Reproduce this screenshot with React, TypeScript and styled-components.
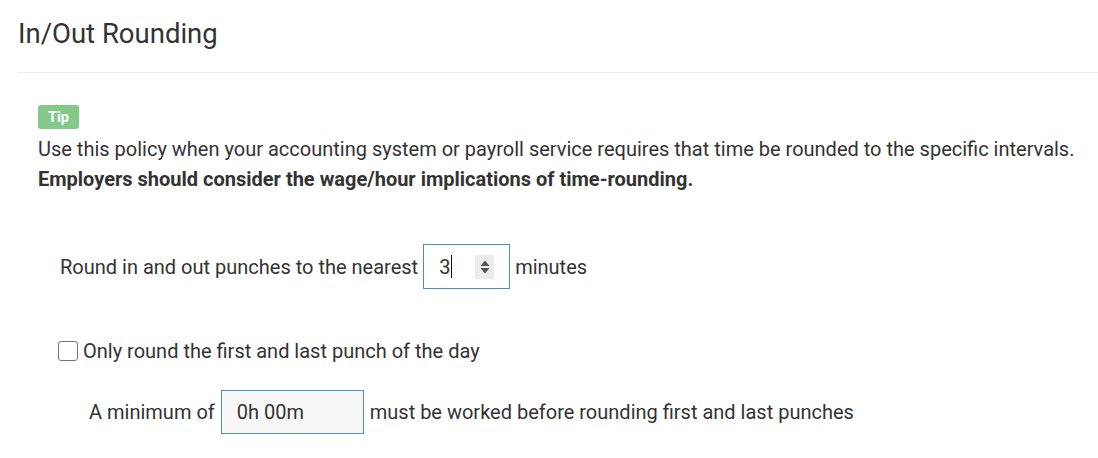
import styled, { createGlobalStyle } from 'styled-components';
import { useState } from 'react';

const GlobalStyle = createGlobalStyle`
  body {
    margin: 0;
    background: #ffffff;
    font-family: Roboto, "Liberation Sans", Arial, sans-serif;
    color: #333333;
  }
`;

const Page = styled.div`
  padding-left: 18px;
`;

const Header = styled.div`
  height: 73px;
  border-bottom: 1px solid #ebebeb;
  box-sizing: border-box;
  padding-top: 17px;
`;

const Title = styled.h2`
  margin: 0;
  font-size: 27.5px;
  font-weight: 400;
  line-height: 34px;
  color: #333333;
`;

const Body = styled.div`
  padding: 32px 0 0 20px;
`;

const Badge = styled.span`
  display: flex;
  align-items: center;
  justify-content: center;
  width: 41px;
  height: 24px;
  margin-bottom: 5px;
  border-radius: 3px;
  background: #84c98a;
  color: #ffffff;
  font-size: 14.5px;
  font-weight: 700;
`;

const Text = styled.p<{ $bold?: boolean }>`
  margin: 0;
  font-size: 20px;
  line-height: 30px;
  font-weight: ${p => (p.$bold ? 700 : 400)};
`;

const Row = styled.div<{ $indent: number; $top: number; $gap: number }>`
  display: flex;
  align-items: center;
  gap: ${p => p.$gap}px;
  margin-left: ${p => p.$indent}px;
  margin-top: ${p => p.$top}px;
  font-size: 20px;
`;

const Box = styled.div<{ $width: number; $height: number; $filled?: boolean }>`
  display: flex;
  align-items: center;
  box-sizing: border-box;
  width: ${p => p.$width}px;
  height: ${p => p.$height}px;
  border: 1px solid #4d8dc6;
  background: ${p => (p.$filled ? '#f7f7f7' : '#ffffff')};
  padding-left: 15px;
  font-size: 20px;
  color: #333333;
`;

const Caret = styled.span`
  display: inline-block;
  width: 1px;
  height: 23px;
  background: #111111;
  margin-left: 1px;
`;

const Spinner = styled.div`
  margin-left: auto;
  margin-right: 15px;
  width: 19px;
  height: 24px;
  background: #ececec;
  display: flex;
  align-items: center;
  justify-content: center;
`;

const Check = styled.button<{ $on: boolean }>`
  flex: none;
  width: 20px;
  height: 20px;
  box-sizing: border-box;
  padding: 0;
  border: 1px solid #767676;
  border-radius: 3px;
  background: ${p => (p.$on ? '#4d8dc6' : '#ffffff')};
  cursor: pointer;
  margin-right: -1px;
`;

export default function App() {
  const [only, setOnly] = useState(false);
  return (
    <Page>
      <GlobalStyle />
      <Header>
        <Title>In/Out Rounding</Title>
      </Header>
      <Body>
        <Badge>Tip</Badge>
        <Text>
          Use this policy when your accounting system or payroll service requires that time be rounded to the specific intervals.
        </Text>
        <Text $bold>Employers should consider the wage/hour implications of time-rounding.</Text>
        <Row $indent={22} $top={50} $gap={5}>
          <span>Round in and out punches to the nearest</span>
          <Box $width={87} $height={45}>
            3<Caret />
            <Spinner>
              <svg width="10" height="16" viewBox="0 0 10 16">
                <path d="M5 1.5 L9.5 7 H0.5 Z" fill="#555" />
                <path d="M5 14.5 L9.5 9 H0.5 Z" fill="#555" />
              </svg>
            </Spinner>
          </Box>
          <span>minutes</span>
        </Row>
        <Row $indent={20} $top={50} $gap={6} onClick={() => setOnly(!only)}>
          <Check $on={only} aria-label="Only round the first and last punch of the day" />
          <span>Only round the first and last punch of the day</span>
        </Row>
        <Row $indent={51} $top={27} $gap={6}>
          <span>A minimum of</span>
          <Box $width={143} $height={44} $filled>
            0h 00m
          </Box>
          <span>must be worked before rounding first and last punches</span>
        </Row>
      </Body>
    </Page>
  );
}
